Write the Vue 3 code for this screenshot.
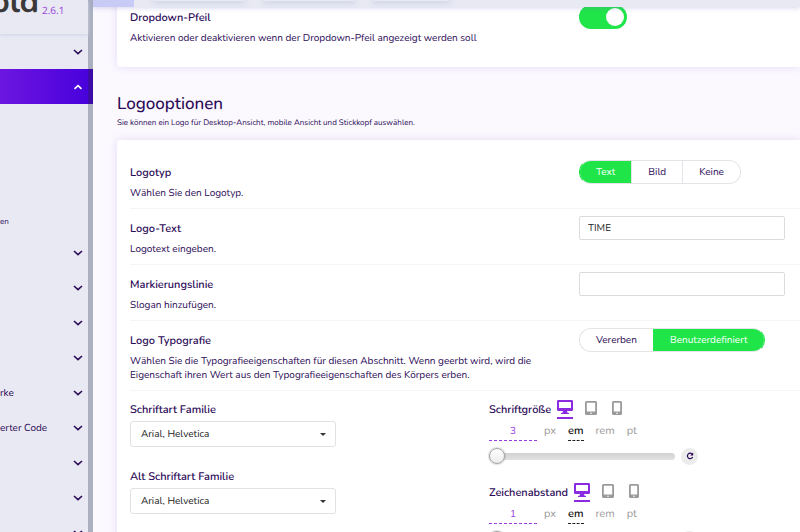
<template>
  <div class="panel">
    <aside class="sidebar">
      <div class="brand">
        <span class="brand-name">old</span>
        <span class="brand-version">2.6.1</span>
      </div>
      <nav class="menu">
        <template v-for="(item, index) in menu" :key="index">
          <button
            class="menu-item"
            :class="{ active: item.open }"
            type="button"
            :aria-expanded="item.open ? 'true' : 'false'"
          >
            <span>{{ item.label }}</span>
            <svg class="chevron" viewBox="0 0 10 6" aria-hidden="true">
              <path :d="item.open ? 'M1.5 4.8 5 1.6 8.5 4.8' : 'M1 1 5 4.6 9 1'" />
            </svg>
          </button>
          <div v-if="item.open" class="submenu">
            <a href="#">en</a>
          </div>
        </template>
      </nav>
    </aside>

    <main class="main">
      <header class="topbar">
        <span class="topbar-tab"></span>
        <span class="topbar-btn"></span>
        <span class="topbar-btn"></span>
        <span class="topbar-btn small"></span>
      </header>

      <div class="content">
        <section class="card card-top">
          <div class="row">
            <div class="info">
              <label class="title" for="arrow">Dropdown-Pfeil</label>
              <p class="desc">Aktivieren oder deaktivieren wenn der Dropdown-Pfeil angezeigt werden soll</p>
            </div>
            <div class="control">
              <input id="arrow" v-model="dropdownArrow" class="toggle" type="checkbox" />
            </div>
          </div>
        </section>

        <h2>Logooptionen</h2>
        <p class="subtitle">Sie können ein Logo für Desktop-Ansicht, mobile Ansicht und Stickkopf auswählen.</p>

        <section class="card">
          <div class="row">
            <div class="info">
              <h3 class="title">Logotyp</h3>
              <p class="desc">Wählen Sie den Logotyp.</p>
            </div>
            <div class="control">
              <div class="group">
                <button
                  v-for="type in logoTypes"
                  :key="type"
                  type="button"
                  :class="{ on: type === logoType }"
                  @click="logoType = type"
                >{{ type }}</button>
              </div>
            </div>
          </div>

          <div class="row">
            <div class="info">
              <label class="title" for="logo-text">Logo-Text</label>
              <p class="desc">Logotext eingeben.</p>
            </div>
            <div class="control">
              <input id="logo-text" v-model="logoText" class="field" type="text" />
            </div>
          </div>

          <div class="row">
            <div class="info">
              <label class="title" for="tagline">Markierungslinie</label>
              <p class="desc">Slogan hinzufügen.</p>
            </div>
            <div class="control">
              <input id="tagline" v-model="tagline" class="field" type="text" />
            </div>
          </div>

          <div class="row">
            <div class="info">
              <h3 class="title">Logo Typografie</h3>
              <p class="desc">
                Wählen Sie die Typografieeigenschaften für diesen Abschnitt. Wenn geerbt wird, wird die
                Eigenschaft ihren Wert aus den Typografieeigenschaften des Körpers erben.
              </p>
            </div>
            <div class="control">
              <div class="group">
                <button
                  v-for="mode in modes"
                  :key="mode"
                  type="button"
                  :class="{ on: mode === typoMode }"
                  @click="typoMode = mode"
                >{{ mode }}</button>
              </div>
            </div>
          </div>

          <div class="typo">
            <div class="typo-col">
              <div v-for="font in fonts" :key="font.id" class="font-block">
                <label class="typo-label" :for="font.id">{{ font.label }}</label>
                <div class="select-wrap">
                  <select :id="font.id" v-model="font.value">
                    <option>Arial, Helvetica</option>
                    <option>Georgia, serif</option>
                  </select>
                </div>
              </div>
            </div>

            <div class="typo-col">
              <div v-for="size in sizes" :key="size.id" class="size-block">
                <div class="size-head">
                  <label class="typo-label" :for="size.id">{{ size.label }}</label>
                  <button class="device on" type="button" aria-label="Desktop">
                    <svg width="16" height="15" viewBox="0 0 16 15">
                      <path fill-rule="evenodd" d="M1.3 0h13.4Q16 0 16 1.3v8.4q0 1.3-1.3 1.3H10l.5 1.8h.8q.7 0 .7.8v.4H4v-.4q0-.8.7-.8h.8L6 11H1.3Q0 11 0 9.700V1.300Q0 0 1.300 0ZM2 2v6h12V2Z" />
                    </svg>
                  </button>
                  <button class="device" type="button" aria-label="Tablet">
                    <svg width="12" height="15" viewBox="0 0 12 15">
                      <path fill-rule="evenodd" d="M1.500 0h9Q12 0 12 1.500v11q0 1.500-1.500 1.500h-9Q0 14 0 12.500v-11Q0 0 1.500 0ZM1.800 1.800v8.700h8.400V1.800ZM6 11.500a.8.8 0 1 0 0 1.600.8.8 0 1 0 0-1.600Z" />
                    </svg>
                  </button>
                  <button class="device" type="button" aria-label="Smartphone">
                    <svg width="10" height="15" viewBox="0 0 10 15">
                      <path fill-rule="evenodd" d="M1.500 0h7Q10 0 10 1.500v11q0 1.500-1.500 1.500h-7Q0 14 0 12.500v-11Q0 0 1.500 0ZM1.800 1.800v8.700h6.400V1.800ZM5 11.500a.8.8 0 1 0 0 1.600.8.8 0 1 0 0-1.600Z" />
                    </svg>
                  </button>
                </div>
                <div class="units">
                  <input :id="size.id" v-model="size.value" class="amount" type="text" />
                  <button
                    v-for="unit in units"
                    :key="unit"
                    type="button"
                    :class="{ on: unit === size.unit }"
                    @click="size.unit = unit"
                  >{{ unit }}</button>
                </div>
                <div class="slide">
                  <input v-model="size.slider" type="range" min="0" max="100" :aria-label="size.label" />
                  <button class="reset" type="button" aria-label="Zurücksetzen" @click="size.slider = 0">
                    <svg width="8" height="8" viewBox="0 0 8 8">
                      <path d="M6.300 2.300A2.700 2.700 0 1 0 6.600 5" fill="none" stroke="currentColor" stroke-width="1.200" />
                      <path d="M7.200.4v3.200H4.200Z" fill="currentColor" />
                    </svg>
                  </button>
                </div>
              </div>
            </div>
          </div>
        </section>
      </div>
    </main>
  </div>
</template>

<script setup>
import { ref, reactive } from 'vue';

const menu = [
  { label: '' },
  { label: '', open: true },
  { label: '' },
  { label: '' },
  { label: '' },
  { label: '' },
  { label: 'rke' },
  { label: 'erter Code' },
  { label: '' },
  { label: '' },
  { label: '' },
];

const dropdownArrow = ref(true);

const logoTypes = ['Text', 'Bild', 'Keine'];
const logoType = ref('Text');
const logoText = ref('TIME');
const tagline = ref('');

const modes = ['Vererben', 'Benutzerdefiniert'];
const typoMode = ref('Benutzerdefiniert');

const fonts = reactive([
  { id: 'font', label: 'Schriftart Familie', value: 'Arial, Helvetica' },
  { id: 'alt-font', label: 'Alt Schriftart Familie', value: 'Arial, Helvetica' },
]);

const units = ['px', 'em', 'rem', 'pt'];
const sizes = reactive([
  { id: 'font-size', label: 'Schriftgröße', value: '3', unit: 'em', slider: 0 },
  { id: 'spacing', label: 'Zeichenabstand', value: '1', unit: 'em', slider: 0 },
]);
</script>

<style>
body {
  margin: 0;
  overflow: hidden;
}
</style>

<style scoped>
* {
  box-sizing: border-box;
}
.panel {
  display: flex;
  height: 100vh;
  overflow: hidden;
  background: #fbf9fe;
  color: #2b0a57;
  font-family: Nunito, Lato, sans-serif;
  font-size: 10px;
  line-height: 14px;
  text-rendering: geometricPrecision;
}
button, input, select {
  font: inherit;
  color: inherit;
  text-rendering: inherit;
}
button {
  border: none;
  background: none;
  padding: 0;
  cursor: pointer;
}
h2, h3, p {
  margin: 0;
}

/* sidebar */
.sidebar {
  flex: 0 0 93px;
  height: 100%;
  overflow: hidden;
  background: linear-gradient(to left, #abb0bf 5px, #e8e9f2 5px);
}
.brand {
  display: flex;
  gap: 3px;
  height: 34px;
  margin-right: 5px;
  box-shadow: 0 1px 3px #cdd3e8;
}
.brand-name {
  display: flex;
  justify-content: flex-end;
  width: 39px;
  color: #3a3838;
  font-size: 32px;
  font-weight: 700;
  line-height: 6px;
}
.brand-version {
  color: #9a3ddd;
  font-family: "Open Sans", sans-serif;
  line-height: 20px;
}
.menu-item {
  display: flex;
  align-items: center;
  justify-content: space-between;
  width: 100%;
  height: 35px;
  padding-right: 10px;
}
.menu-item.active {
  background: linear-gradient(to left, rgba(50, 20, 110, 0.5) 5px, transparent 5px), linear-gradient(to right, #6d16e0, #4700dc);
  color: #fff;
}
.chevron {
  width: 10px;
  height: 6px;
  fill: none;
  stroke: currentColor;
  stroke-width: 1.6;
}
.submenu {
  display: flex;
  align-items: flex-end;
  height: 131px;
  padding-bottom: 6px;
}
.submenu a {
  color: inherit;
  font-size: 8px;
  text-decoration: none;
}

/* main */
.main {
  flex: 1;
  min-width: 0;
}
.topbar {
  position: relative;
  z-index: 1;
  display: flex;
  gap: 20px;
  height: 7px;
  background: #e8e9f2;
  box-shadow: 0 1px 5px rgba(120, 120, 200, 0.3);
}
.topbar-tab {
  width: 41px;
  background: #c7cbf6;
}
.topbar-btn {
  width: 90px;
  height: 1px;
  box-shadow: 0 0 6px 1px #b9c0e2;
}
.topbar-btn.small {
  width: 75px;
}
.content {
  margin-top: -9px;
  padding-left: 24px;
}
.card {
  padding: 13px 0 14px 13px;
  border-radius: 4px 0 0 4px;
  background: #fff;
  box-shadow: 0 0 8px rgba(110, 50, 210, 0.16);
}
.card-top {
  padding-top: 0;
}
.row {
  display: grid;
  grid-template-columns: 449fr 221fr;
  padding: 7px 0 8px;
  border-bottom: 1px solid #f5f5f8;
}
.card-top .row {
  border-bottom: none;
}
.card-top .row,
.card-top {
  padding-bottom: 11px;
}
.info {
  padding: 6px 40px 0 0;
}
.title {
  display: block;
  margin-bottom: 6px;
  font-size: 11px;
  font-weight: 600;
}
.control {
  padding-right: 15px;
}
.toggle {
  display: block;
  appearance: none;
  width: 48px;
  height: 24px;
  margin: 0;
  padding: 3px;
  border-radius: 12px;
  background: #1fe549;
}
.toggle::before {
  content: '';
  display: block;
  width: 18px;
  height: 18px;
  margin-left: 24px;
  border-radius: 50%;
  background: #fff;
}
h2 {
  margin-top: 26px;
  font-size: 17px;
  font-weight: 500;
  line-height: 24px;
}
.subtitle {
  margin-bottom: 11px;
  font-size: 8px;
  line-height: 12px;
}
.group {
  display: inline-flex;
  height: 24px;
  border: 1px solid #e4e4e8;
  border-radius: 12px;
  overflow: hidden;
}
.group button {
  padding: 0 16px;
}
.group button + button {
  border-left: 1px solid #e4e4e8;
}
.group .on,
.group button + .on {
  border-color: #1fe549;
  background: #1fe549;
  color: #fff;
}
.group:has(.on:first-child) {
  border-left-color: #1fe549;
}
.group:has(.on:last-child) {
  border-right-color: #1fe549;
}
.field {
  display: block;
  width: 100%;
  height: 24px;
  padding: 0 8px;
  border: 1px solid #dcdcde;
  border-radius: 2px;
  background: #fff;
  color: #222;
}

/* typography */
.typo {
  display: grid;
  grid-template-columns: 359fr 311fr;
  padding-top: 12px;
}
.typo-label {
  display: block;
  font-size: 11px;
  font-weight: 600;
}
.font-block {
  width: 206px;
  margin-bottom: 23px;
}
.select-wrap {
  position: relative;
  margin-top: 4px;
}
.select-wrap::after {
  content: '';
  position: absolute;
  top: 12px;
  right: 10px;
  border: 3px solid transparent;
  border-top-color: #333;
  border-bottom: none;
}
select {
  display: block;
  appearance: none;
  width: 100%;
  height: 26px;
  padding: 0 10px;
  border: 1px solid #e2e2e4;
  border-radius: 3px;
  background: #fff;
  color: #222;
}
.size-block {
  height: 83px;
}
.size-head {
  display: flex;
  height: 17px;
}
.size-head .typo-label {
  margin-right: 6px;
}
.device {
  height: 19px;
  margin: -3px 15px 0 0;
  color: #9a9a9a;
}
.device.on {
  margin-right: 12px;
  border-bottom: 2px solid #8a2be2;
  color: #8a2be2;
}
.device svg {
  display: block;
  height: 15px;
  margin-bottom: 2px;
  fill: currentColor;
}
.units {
  display: flex;
  gap: 12px;
  height: 21px;
  padding-top: 4px;
  font-size: 11px;
}
.units button {
  height: 17px;
  padding-bottom: 2px;
  border-bottom: 1px dashed transparent;
  color: #9a9a9a;
}
.units button.on {
  border-bottom-color: #222;
  color: #111;
  font-weight: 600;
}
.amount {
  width: 48px;
  height: 17px;
  margin-right: -5px;
  padding: 0 0 2px;
  border: none;
  border-bottom: 1px dashed #9a3ddd;
  background: none;
  color: #9a3ddd;
  font-size: 10px;
  text-align: center;
}
.slide {
  display: flex;
  align-items: center;
  gap: 6px;
  height: 16px;
  margin-top: 7px;
}
.slide input {
  appearance: none;
  width: 186px;
  height: 7px;
  margin: 0;
  border-radius: 4px;
  background: linear-gradient(#d2d2d2, #e2e2e2);
}
.slide input::-webkit-slider-thumb {
  appearance: none;
  width: 16px;
  height: 16px;
  border: 1px solid #a5a5a5;
  border-radius: 50%;
  background: linear-gradient(#fff, #ececec);
  box-shadow: 0 0 2px rgba(0, 0, 0, 0.4);
}
.reset {
  display: grid;
  place-items: center;
  width: 17px;
  height: 17px;
  border-radius: 50%;
  background: #ececec;
}
</style>
